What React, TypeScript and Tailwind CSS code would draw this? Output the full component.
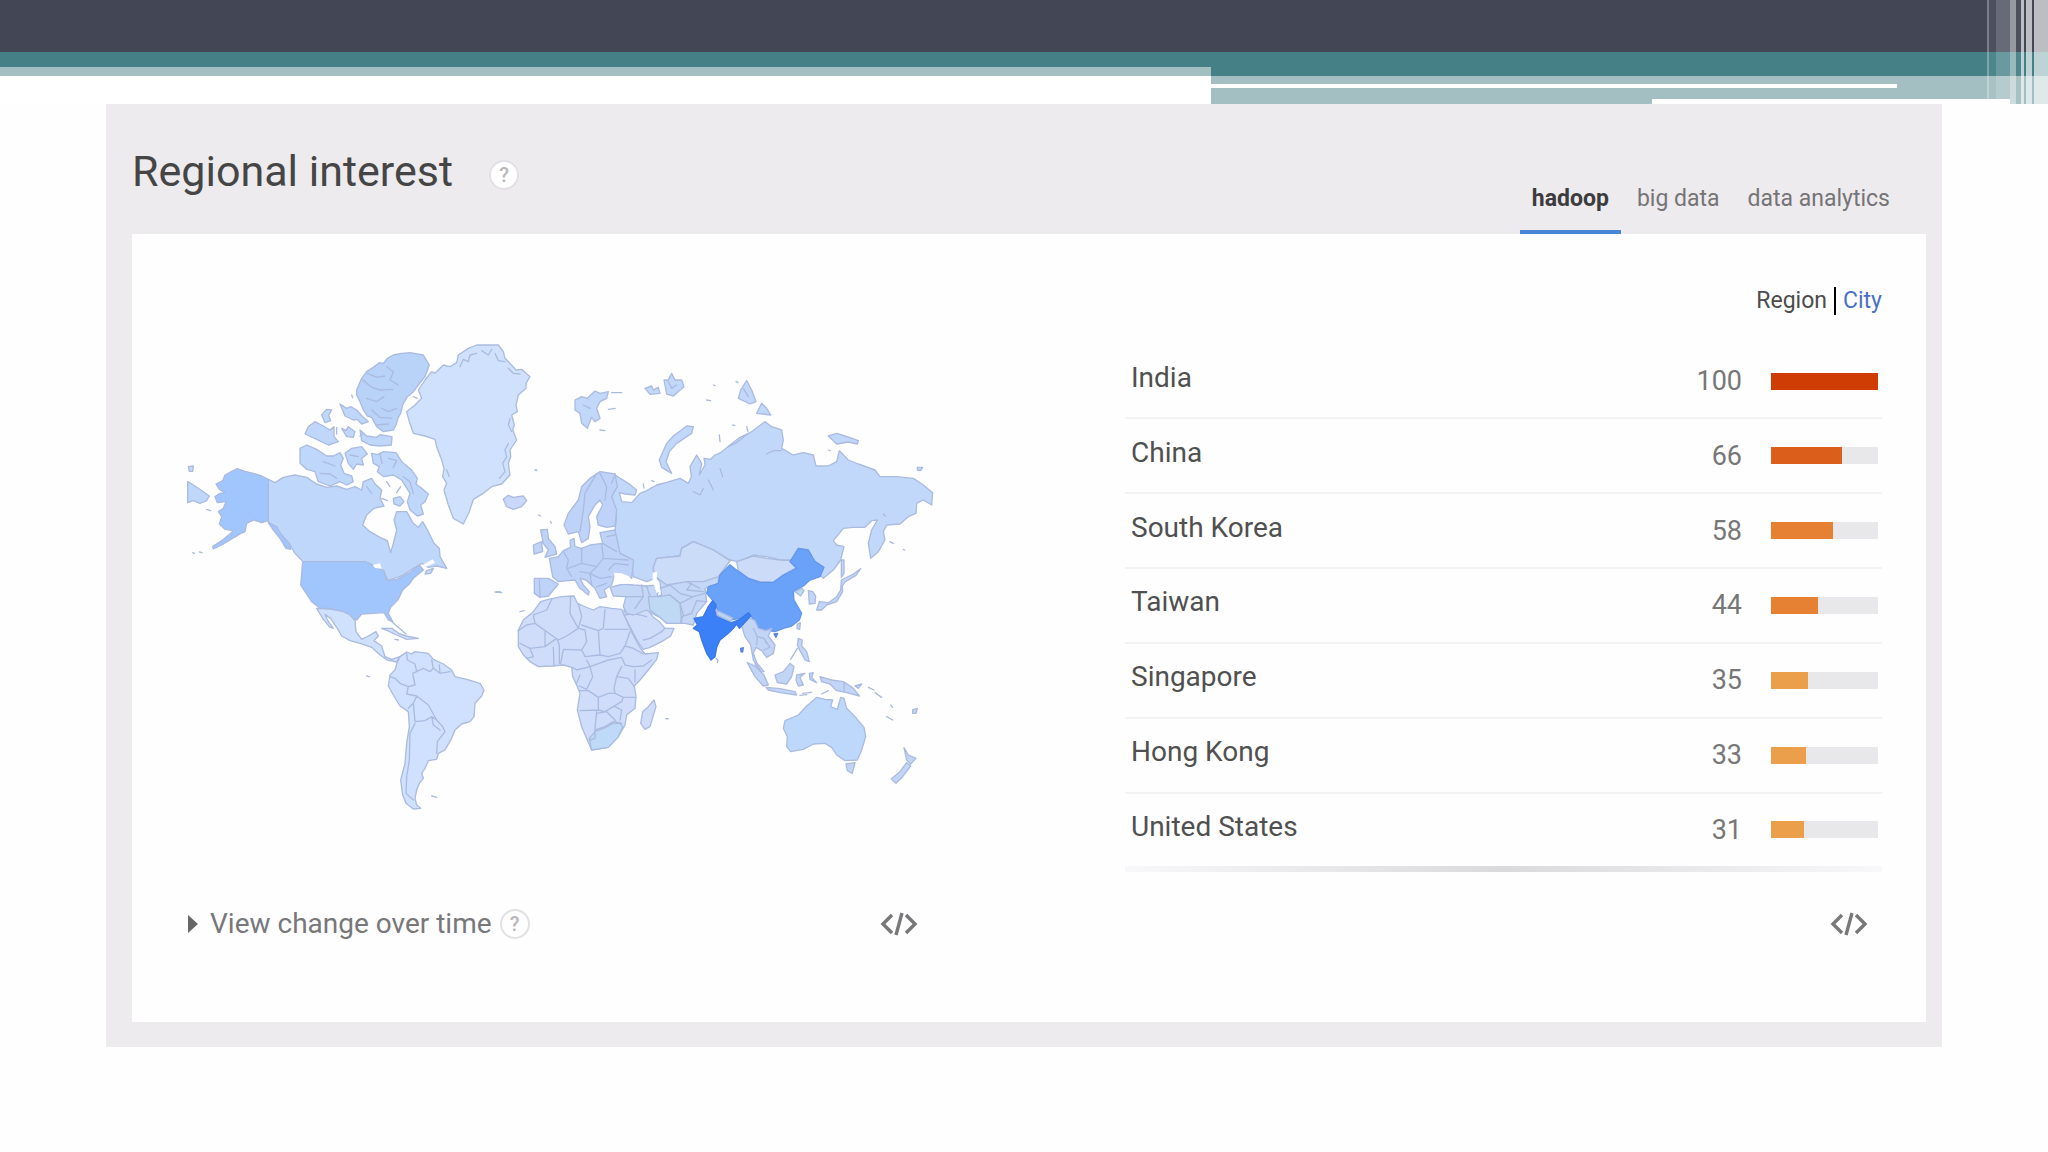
import React, { useState } from "react";

interface RegionRow {
  name: string;
  value: number;
  color: string;
}

const regions: RegionRow[] = [
  { name: "India", value: 100, color: "bg-[#cf3d04]" },
  { name: "China", value: 66, color: "bg-[#db5f1b]" },
  { name: "South Korea", value: 58, color: "bg-[#e68033]" },
  { name: "Taiwan", value: 44, color: "bg-[#e68033]" },
  { name: "Singapore", value: 35, color: "bg-[#ec9f4a]" },
  { name: "Hong Kong", value: 33, color: "bg-[#ec9f4a]" },
  { name: "United States", value: 31, color: "bg-[#ec9f4a]" },
];

const tabs = ["hadoop", "big data", "data analytics"];

const SlideHeader: React.FC = () => (
  <div className="relative h-[104px] bg-white" aria-hidden="true">
    <div className="h-[52px] bg-[#424655]" />
    <div className="flex h-[52px]">
      <div className="w-[1211px]">
        <div className="h-[15px] bg-[#458087]" />
        <div className="h-[9px] bg-[#a3bfc1]" />
      </div>
      <div className="flex flex-1 flex-col">
        <div className="h-6 bg-[#458087]" />
        <div className="flex-1 bg-[#a3bfc1] pt-2">
          <div className="mr-[151px] h-1 bg-white" />
        </div>
      </div>
    </div>
    <div className="absolute right-[38px] bottom-0 h-[5px] w-[358px] bg-white" />
    {/* translucent stripes in the corner */}
    <div className="absolute top-0 right-[38px] flex h-[99px] w-[23px]">
      <div className="w-0.5 bg-white/30" />
      <div className="w-[7px] bg-white/5" />
      <div className="flex-1 bg-white/20" />
    </div>
    <div className="absolute top-0 right-0 flex h-[104px] w-[38px]">
      <div className="w-1.5 bg-white/45" />
      <div className="w-[5px] bg-white/5" />
      <div className="w-[3px] bg-white/65" />
      <div className="w-0.5" />
      <div className="w-1.5 bg-white/65" />
      <div className="w-0.5" />
      <div className="flex-1 bg-white/65" />
    </div>
  </div>
);

const HelpButton: React.FC = () => (
  <button
    type="button"
    aria-label="Help"
    className="flex size-[30px] items-center justify-center rounded-full border-2 border-[#e2e0e3] bg-[#fefefe] text-xl font-medium text-[#b9b7ba]"
  >
    ?
  </button>
);

const EmbedButton: React.FC = () => (
  <button type="button" aria-label="Embed" className="text-[#78777a]">
    <svg
      viewBox="0 0 38 24"
      className="h-6 w-[38px]"
      fill="none"
      stroke="currentColor"
      strokeWidth="3.4"
    >
      <path d="M12 3 3 12l9 9M26 3l9 9-9 9M22 1l-6 22" />
    </svg>
  </button>
);

const WorldMap: React.FC = () => (
  <svg
    viewBox="0 0 2280 1500"
    className="w-full"
    role="img"
    aria-label="Interest by country"
    stroke="#abbbe0"
    strokeWidth="4"
    strokeLinejoin="round"
    strokeLinecap="round"
  >
    {/* North America and Greenland */}
    <g fill="#bfd7fb">
      <path d="M265 448L285 458 310 442 345 435 380 442 410 462 440 472 470 468 500 478 525 470 545 480 550 455 575 445 585 462 605 480 600 505 612 528 582 535 560 555 548 585 570 605 600 622 622 632 632 668 640 640 650 600 642 570 650 545 680 545 700 580 715 592 728 575 745 605 762 640 778 655 780 680 800 715 770 708 745 712 725 700 700 715 670 735 625 752 610 725 590 710 555 695 370 695 345 670 330 645 300 610 265 575Z" />
      <path d="M23 455L45 468 88 498 80 512 60 520 40 512 23 518Z" />
      <path
        fill="#b9d2f8"
        d="M640 75L665 70 690 68 730 75 748 105 735 140 715 165 700 185 682 200 668 225 662 250 655 262 648 285 640 300 610 305 590 290 575 262 562 258 550 240 540 215 530 195 530 180 545 145 560 125 580 112 598 98 610 100 622 85Z"
      />
      <path d="M540 300L560 318 590 322 600 314 636 320 634 345 600 348 570 345 545 332Z" />
      <path d="M480 222L500 235 512 230 530 240 550 262 565 275 545 282 532 268 520 270 495 258Z" />
      <path d="M425 255L440 238 455 240 446 256 452 272 435 278Z" />
      <path d="M375 312L385 290 405 275 430 288 450 300 462 290 462 320 475 335 445 345 410 328Z" />
      <path d="M485 295L498 302 505 290 525 305 520 322 500 320Z" />
      <path d="M360 355L380 345 410 358 440 378 460 378 480 368 490 385 482 405 492 430 515 438 520 455 500 465 480 455 450 468 415 455 405 425 380 418 360 400Z" />
      <path d="M495 370L515 355 545 350 562 372 545 385 550 405 530 402 520 418 505 400Z" />
      <path d="M575 370L592 374 610 365 648 368 665 395 695 420 712 445 708 462 725 475 745 492 735 515 722 525 730 552 712 558 690 540 682 515 690 490 665 450 640 435 612 440 592 425 598 410 580 400Z" />
      <path d="M640 505L660 500 672 515 660 528 642 522Z" />
      <path
        fill="none"
        d="M562 130L590 142 615 138M548 150L575 172 600 180 640 178M620 110L640 125 630 150 655 165M560 205L590 215 612 200M605 235L625 245 650 235M575 240L600 262 635 265M590 285L625 282M600 372L606 400M625 385L650 392 640 412M670 440L690 455 700 490M560 470L575 490M430 395L465 408M420 430L450 432 470 445M510 375L535 380M470 292L470 312M540 318L548 312M605 505L622 512M650 488L662 470M620 455L630 470"
      />
    </g>
    <path
      fill="#d0e1fe"
      d="M890 45L955 45 970 65 975 85 988 98 1008 120 1025 118 1050 140 1038 160 1038 175 1015 195 1008 225 1012 245 995 255 1003 285 998 300 1010 330 1000 345 990 360 992 380 985 400 990 435 965 462 935 470 910 490 880 508 868 545 850 582 820 565 805 525 792 480 800 460 788 440 792 415 785 390 770 350 765 328 735 318 700 310 688 275 680 245 705 225 725 205 715 180 735 150 755 125 765 130 790 105 810 110 830 98 835 75 865 55Z"
    />
    <path fill="none" d="M840 110L850 88 865 95 870 75 890 70M905 62L925 75 935 58M945 70L955 92 975 95M985 115L1000 130 1020 132M990 265L985 285 995 305M985 340L975 360 980 380 968 400 975 425 958 445M800 420L808 440M700 200L712 205" />
    <g fill="#a1c5fd">
      <path d="M172 416L195 424 220 430 245 438 265 448 265 572 245 578 222 570 200 580 195 605 180 612 150 630 125 645 100 657 98 650 125 632 150 612 160 602 135 598 118 582 125 560 115 545 130 535 138 515 112 518 105 500 120 490 135 488 118 478 108 462 128 452 135 435 155 424Z" />
      <path d="M368 695L555 695 590 712 612 722 620 752 650 748 690 728 718 705 730 720 700 745 688 762 668 780 655 808 632 832 625 850 638 875 625 870 612 848 580 850 545 852 530 870 515 865 500 850 485 845 450 835 420 835 395 815 375 785 362 765 365 730Z" />
      <path d="M265 578L290 590 305 615 328 640 332 658 318 655 300 625 280 600Z" />
    </g>
    <path fill="#fefefe" stroke="none" d="M578 705L600 700 605 716 585 714ZM728 705L758 688 765 698 735 712Z" />
    <g fill="#c9d8f8">
      <path d="M970 508L985 496 1000 502 1030 498 1040 512 1025 530 1000 538 980 530Z" />
      <path d="M740 722L760 715 752 730 735 732ZM25 410L40 408 38 424 28 424ZM38 668L44 670M58 666L66 668M80 538L92 542M515 195L518 203M950 785L962 786M1066 420L1070 422" />
    </g>

    {/* Central and South America */}
    <g transform="translate(360 690)" fill="#d0e1fd">
      <path d="M50 145L95 148 130 155 150 165 165 182 168 215 185 238 205 228 228 215 235 228 222 242 245 258 255 290 275 298 300 290 290 306 262 300 240 285 215 262 180 250 150 242 125 228 112 205 92 175 75 163 85 185 100 205 88 200 70 178Z" />
      <path d="M245 205L275 205 300 222 318 228 355 235 320 238 290 225 262 212ZM270 180L290 198 318 222M285 238L295 240M200 348L208 350M395 708L410 712" />
      <path
        fill="#cfe1fe"
        d="M300 290L320 276 335 282 345 275 385 280 400 298 430 312 455 330 465 350 500 358 540 370 552 390 545 408 525 430 522 470 510 485 485 492 465 510 455 535 435 570 415 580 410 598 385 602 375 625 365 640 370 655 358 670 350 690 345 715 350 735 362 745 340 747 318 730 308 705 302 660 315 610 320 550 328 500 325 455 300 438 280 405 265 378 270 345 285 330 292 306Z"
      />
      <path
        fill="none"
        d="M320 278L322 300 345 312 350 335 338 340 345 375 325 380 320 402 350 408 385 435 410 480 428 500 435 515 412 545 410 580M270 350L285 355 300 370 325 380M325 445L340 430 350 408M340 430L345 485 375 482 395 470 410 480M345 490L330 520 328 600 320 650 318 700 340 720M350 335L370 325 390 335 400 325 395 300M400 325L420 340 450 335M420 340L418 315M395 470L400 495 420 510"
      />
    </g>

    {/* Africa and Arabia */}
    <g transform="translate(360 690)" fill="#cfddfb">
      <path d="M722 125L745 118 785 110 822 108 832 130 850 138 880 150 900 140 935 145 965 148 975 170 990 205 1005 235 1020 262 1035 282 1075 278 1070 298 1045 330 1020 360 1003 378 1008 410 1005 445 980 465 975 495 955 530 925 562 875 570 862 540 845 500 832 450 840 400 830 375 818 350 815 322 790 315 755 318 715 320 690 305 670 285 655 260 655 210 670 180 700 155Z" />
      <path d="M1062 420L1068 440 1050 500 1035 508 1022 490 1028 455 1045 440Z" />
      <path fill="#bfdaf8" d="M885 515L910 505 940 490 960 490 968 500 955 530 925 562 875 570 868 535Z" />
      <path
        fill="none"
        d="M755 118L740 150 700 165 705 190 680 195 655 212M705 190L775 240 800 228 835 205 810 160 812 108M735 215L735 260 690 265 660 250M690 265L700 290 680 295M735 260L770 235M770 235L778 255 778 310M760 262L762 318M835 205L855 210 860 245 845 270 790 268 782 310M835 205L845 170 835 130M845 195L895 212 900 285 855 290 845 270M895 212L910 205 915 148M915 208L985 208M900 285L925 290 960 280 975 258 990 215M860 300L870 320 830 330 818 322M870 320L925 300 965 292 975 315 1000 320 1030 318 1055 300M960 280L975 258 1000 265 1030 282M870 320L878 350 860 388 838 378M965 320L950 350 942 385 945 400 925 400 895 412 865 392 838 392M950 350L985 355 1003 380M1005 330L1005 365M895 412L895 450 840 452M895 450L915 455 940 440 965 425 970 412 945 400M970 412L1005 412M890 455L885 505 885 535 870 540M890 460L920 455 945 480 950 490M885 510L915 500 940 485 965 490M945 440L965 450 960 480M840 345L830 370"
      />
      <path d="M972 150L1000 140 1020 130 1045 150 1060 172 1078 185 1095 205 1122 205 1112 228 1085 245 1050 262 1030 268 1015 248 1000 220 985 190 972 165Z" />
      <path fill="none" d="M975 165L1000 160 1040 170M1030 240L1050 235 1085 215 1095 205M585 96L605 98M660 155L672 152M1098 476L1104 476" />
    </g>

    {/* Europe and Asia */}
    <g transform="translate(960 0)" fill="#c2d8fb">
      <path d="M345 435L385 460 410 480 405 495 375 492 358 488 365 515 395 518 420 490 440 482 470 465 500 457 540 445 565 460 574 440 570 410 590 375 605 400 598 435 615 405 612 385 632 388 645 375 662 368 690 345 720 322 750 308 775 290 795 275 815 290 845 300 850 330 845 355 880 375 910 368 940 375 948 408 985 408 1010 395 1018 362 1045 390 1075 402 1125 420 1140 440 1190 440 1240 445 1270 465 1298 488 1295 525 1270 510 1250 520 1248 550 1225 560 1200 582 1160 585 1150 605 1155 630 1135 665 1112 685 1105 640 1115 600 1132 570 1115 572 1095 592 1060 592 1030 595 1000 632 1010 645 1032 650 1022 690 1000 720 970 745 960 735 970 712 940 690 925 660 895 655 880 690 840 690 800 680 760 675 715 695 690 690 640 660 580 635 545 655 540 678 470 685 460 715 465 745 440 755 400 740 395 705 400 690 360 670 345 640 345 600 350 560 335 500Z" />
      <path d="M580 290L560 288 520 318 500 340 478 390 485 412 515 430 498 395 508 365 530 340 575 310Z" />
      <path d="M225 210L245 200 262 205 285 183 300 190 325 185 320 205 300 215 290 235 300 265 285 275 275 262 262 295 245 280 240 250 225 240Z" />
      <path d="M435 175L455 168 460 180 475 172 480 190 450 193ZM492 150L505 150 515 130 525 150 545 150 552 170 520 198 500 192Z" />
      <path d="M740 152L755 180 768 215 750 222 715 205 722 180ZM785 220L800 235 812 255 770 250Z" />
      <path d="M985 318L1010 310 1035 318 1075 332 1072 342 1045 336 1010 342ZM1252 412L1268 412 1262 422 1252 420Z" />
      <path fill="none" d="M335 188L365 188M325 238L345 235M620 210L632 212M640 165L645 167M708 154L714 158M698 285L704 287M658 315L660 335M430 462L432 474M455 452L462 455M660 415L668 440M580 485L600 495 610 475M625 450L640 480M1150 552L1156 558M1170 635L1180 640M1210 658L1214 660M300 300L315 302M105 420L110 420M115 555L122 558M152 575L154 580M985 360L990 362M685 350L710 338 742 312M740 290L744 305M800 372L822 362 845 362M505 155L515 175 530 165M250 225L270 235M730 175L745 200" />
    </g>
    <g transform="translate(960 0)" fill="#bfd3f8">
      <path d="M345 432L300 425 270 445 245 470 235 510 205 550 192 585 205 612 235 605 245 638 265 625 270 590 265 560 285 525 300 510 308 525 290 560 295 585 320 592 345 588 350 540 335 500 352 470Z" />
      <path d="M345 600L300 608 308 640 270 645 245 655 225 650 222 625 210 632 212 652 190 662 175 680 148 685 158 740 175 755 205 752 225 750 240 775 265 795 268 785 250 765 240 745 258 750 285 775 300 805 320 800 312 780 335 765 345 730 395 745 400 700 400 690 360 670Z" />
      <path d="M103 745L145 745 175 762 160 780 145 798 120 802 103 790Z" />
      <path d="M122 600L142 598 145 625 165 650 170 672 135 682 145 660 130 640ZM100 645L125 635 128 665 102 672Z" />
      <path
        fill="none"
        d="M300 430L320 470 315 510M290 430L255 490 250 540 240 605M345 432L335 460M190 665L205 690 200 715 215 740M245 655L245 700 205 715M245 700L290 710 310 685 385 690M310 685L305 640M290 710L270 730 300 745 335 740M240 725L270 730 275 765M320 620L345 615M308 640L350 665M325 720L345 700 385 705M118 750L120 800M290 770L320 760"
      />
    </g>
    <g transform="translate(960 0)" fill="#c4d7f7">
      <path d="M330 772L370 762 400 765 440 768 470 765 475 785 470 800 485 795 480 755 462 735 460 715 470 685 540 678 545 655 580 635 640 660 690 692 655 740 655 762 615 775 620 815 590 850 580 885 555 880 500 880 480 862 465 855 440 840 400 855 380 850 370 830 378 800 340 798Z" />
      <path fill="#bfd9f4" d="M445 800L475 800 510 795 540 820 545 880 500 880 480 862 450 840Z" />
      <path fill="#cbdcf8" d="M470 685L540 678 545 655 580 635 640 660 690 692 655 740 610 755 560 755 500 765 480 750 462 735 460 712Z" />
      <path fill="none" d="M425 765L430 800 405 835M440 768L450 800M480 775L510 765 540 790 575 800M510 795L540 820 580 800 615 790M540 820L550 855 540 880M560 755L600 775M575 760L560 780 610 785M375 800L430 800M620 815L590 812 575 850 550 858" />
      <path fill="#fefefe" stroke="none" d="M342 728L365 730 385 738 405 758 370 762 345 758ZM458 728L472 725 470 750 482 785 470 788 458 755Z" />
      <path fill="#ccdcf8" d="M710 695L760 678 800 685 840 690 870 692 890 712 850 735 820 757 780 755 745 745 715 722Z" />
      <path
        fill="#6aa2fa"
        stroke="#6497ec"
        d="M690 704L712 722 745 745 780 757 820 757 850 735 890 715 870 695 895 655 925 660 945 695 972 712 960 740 930 750 910 768 880 785 882 810 905 850 898 870 875 888 850 895 825 905 795 900 770 892 750 850 720 865 690 870 655 845 642 815 620 790 625 770 655 760 660 735Z"
      />
    </g>

    {/* India, South East Asia and Oceania */}
    <g transform="translate(1380 690)" fill="#c3d5f6">
      <path d="M305 198L325 172 345 182 355 205 378 212 395 205 385 228 405 255 400 280 380 292 365 272 348 262 340 280 350 308 372 335 362 335 340 300 332 255 315 230Z" />
      <path
        fill="#3b80f6"
        stroke="#3a78e6"
        d="M205 140L218 122 228 135 225 155 245 175 275 188 300 178 325 158 332 168 310 192 298 205 290 192 280 205 265 220 240 240 230 262 225 290 213 300 200 280 185 240 178 215 160 205 172 195 162 175 190 170Z"
      />
      <path fill="#bcd3f7" d="M228 150L278 174 272 184 232 166Z" />
      <path d="M322 308L345 318 372 345 385 375 370 378 345 350Z" />
      <path d="M378 382L420 386 465 395 470 405 420 398 385 390ZM488 400L515 397M480 406L500 404M545 402L565 392" />
      <path d="M405 345L430 335 450 310 462 320 455 350 440 372 412 368Z" />
      <path d="M470 345L495 340 480 352 490 375 475 378 468 360ZM508 340L520 338 515 352 530 368 510 358Z" />
      <path d="M475 235L487 240 485 258 500 275 508 305 495 300 480 272 472 255ZM452 298L472 265" />
      <path d="M540 350L575 360 610 365 640 385 658 408 620 398 590 392 570 372 545 365ZM645 378L665 372 655 385ZM685 382L702 390M705 398L725 412" />
      <path
        fill="#bed8fc"
        d="M530 412L555 418 578 420 572 440 592 448 602 412 612 415 620 445 645 470 672 502 677 530 665 570 652 600 615 602 590 585 575 562 555 550 520 552 490 568 452 575 440 560 442 530 430 505 435 482 475 465 500 438 515 425Z"
      />
      <path d="M618 612L645 608 637 640 622 632Z" />
      <path d="M792 563L805 585 828 595 812 612 800 600ZM800 608L812 618 788 650 768 670 754 656 780 635ZM818 450L832 445 828 460 818 460ZM740 470L758 480M752 435L758 442" />
      <path d="M530 150L538 125 565 128 590 110 602 90 604 60 640 42 662 26 648 46 615 66 607 78 608 95 590 125 560 135 545 150ZM604 0L612 0 612 40 604 52Z" />
      <path d="M505 92L518 95 527 108 525 130 508 132ZM472 192L481 188 479 208 471 206Z" />
      <path fill="#bcdce8" d="M465 95L485 85 492 92 482 108Z" />
      <path fill="#5a86d6" stroke="#5a86d6" d="M402 222L413 220 408 232ZM302 265L310 263 308 276 303 275Z" />
      <path fill="none" d="M340 205L352 230 372 235 380 250M352 230L350 255M372 235L390 262 370 270M228 295L234 300 232 308M345 312L360 328M612 368L612 392M78 476L84 476" />
    </g>
  </svg>
);

const RegionTable: React.FC = () => (
  <table className="h-[521px] w-full">
    <tbody>
      {regions.map((region) => (
        <tr key={region.name} className="border-b-2 border-[#f4f2f5] last:border-0">
          <th
            scope="row"
            className="pb-1.5 pl-1.5 text-left text-[28px] leading-9 font-normal text-[#505050]"
          >
            {region.name}
          </th>
          <td className="pr-[29px] text-right text-[27px] leading-9 text-[#777777]">
            {region.value}
          </td>
          <td className="w-[111px]">
            <div className="h-[17px] w-[107px] bg-[#e8e7e9]">
              <div
                className={`h-full ${region.color}`}
                style={{ width: `${region.value}%` }}
              />
            </div>
          </td>
        </tr>
      ))}
    </tbody>
  </table>
);

const App: React.FC = () => {
  const [activeTab, setActiveTab] = useState(tabs[0]);

  return (
    <div className="min-h-screen bg-[#fefefe] font-[Roboto,sans-serif]">
      <SlideHeader />
      <main className="mx-[106px] bg-[#edebee] pr-4 pb-[25px] pl-[26px]">
        <header className="flex h-[130px] items-end justify-between pr-6">
          <div className="flex items-end gap-9 pb-[38px]">
            <h1 className="text-[43px] leading-[50px] text-[#454545]">
              Regional interest
            </h1>
            <div className="pb-1.5">
              <HelpButton />
            </div>
          </div>
          <div role="tablist" className="flex gap-1">
            {tabs.map((tab) => (
              <button
                key={tab}
                type="button"
                role="tab"
                aria-selected={tab === activeTab}
                onClick={() => setActiveTab(tab)}
                className={`border-b-4 px-3 pb-[15px] text-[23px] leading-8 ${
                  tab === activeTab
                    ? "border-[#4a86d8] font-bold text-[#3c3c3e]"
                    : "border-transparent text-[#757476]"
                }`}
              >
                {tab}
              </button>
            ))}
          </div>
        </header>

        <section className="flex justify-between bg-[#fefefe] pr-11 pb-[78px] pl-12">
          <div className="w-[760px] pt-24">
            <WorldMap />
            <div className="mt-[74px] flex h-10 items-center justify-between pr-[22px] pl-2">
              <div className="flex items-center gap-2">
                <button
                  type="button"
                  className="flex items-center gap-3 text-[28px] leading-9 text-[#78777a]"
                >
                  <svg viewBox="0 0 10 18" className="h-[18px] w-2.5" fill="#666">
                    <path d="M0 0l10 9-10 9z" />
                  </svg>
                  View change over time
                </button>
                <HelpButton />
              </div>
              <EmbedButton />
            </div>
          </div>

          <div className="w-[757px] pt-[47px]">
            <div className="flex h-10 items-center justify-end gap-[7px] text-[23px]">
              <span className="text-[#4c4c4c]">Region</span>
              <span className="h-7 w-0.5 bg-black" />
              <a href="#city" className="text-[#4a70c8]">
                City
              </a>
            </div>
            <div className="mt-6">
              <RegionTable />
            </div>
            <div className="h-1.5 bg-linear-to-r from-[#f8f7f9] via-[#dad9db] to-[#f8f7f9]" />
            <div className="mt-8 flex h-10 items-center justify-end pr-3.5">
              <EmbedButton />
            </div>
          </div>
        </section>
      </main>
    </div>
  );
};

export default App;
